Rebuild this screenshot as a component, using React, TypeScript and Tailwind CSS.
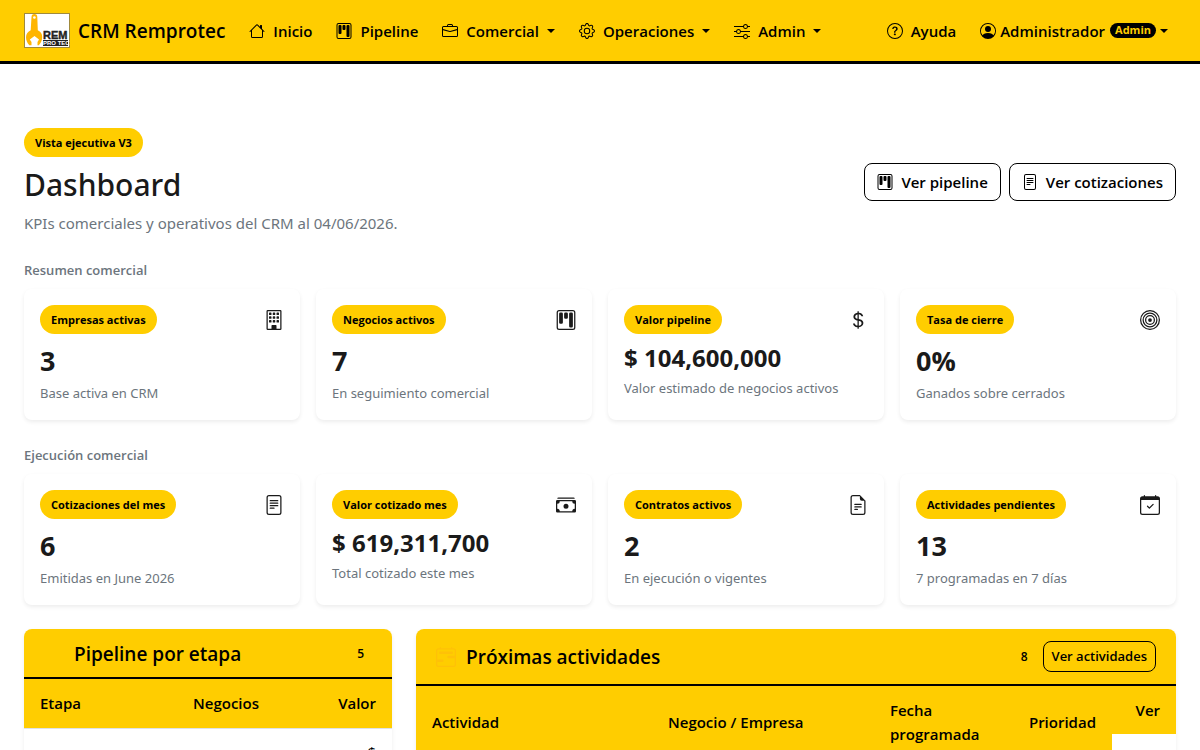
import React from 'react';
import type { IconType } from 'react-icons';
import {
    BsBriefcase,
    BsBuilding,
    BsBullseye,
    BsCalendar2Range,
    BsCalendarCheck,
    BsCashStack,
    BsCurrencyDollar,
    BsFileEarmarkText,
    BsFileText,
    BsGear,
    BsHouse,
    BsKanban,
    BsPersonCircle,
    BsQuestionCircle,
    BsSliders,
} from 'react-icons/bs';

interface NavItem {
    label: string;
    icon: IconType;
    dropdown?: boolean;
}

interface Kpi {
    label: string;
    value: string;
    hint: string;
    icon: IconType;
    money?: boolean;
}

const navItems: NavItem[] = [
    { label: 'Inicio', icon: BsHouse },
    { label: 'Pipeline', icon: BsKanban },
    { label: 'Comercial', icon: BsBriefcase, dropdown: true },
    { label: 'Operaciones', icon: BsGear, dropdown: true },
    { label: 'Admin', icon: BsSliders, dropdown: true },
];

const resumen: Kpi[] = [
    { label: 'Empresas activas', value: '3', hint: 'Base activa en CRM', icon: BsBuilding },
    { label: 'Negocios activos', value: '7', hint: 'En seguimiento comercial', icon: BsKanban },
    { label: 'Valor pipeline', value: '$ 104,600,000', hint: 'Valor estimado de negocios activos', icon: BsCurrencyDollar, money: true },
    { label: 'Tasa de cierre', value: '0%', hint: 'Ganados sobre cerrados', icon: BsBullseye },
];

const ejecucion: Kpi[] = [
    { label: 'Cotizaciones del mes', value: '6', hint: 'Emitidas en June 2026', icon: BsFileText },
    { label: 'Valor cotizado mes', value: '$ 619,311,700', hint: 'Total cotizado este mes', icon: BsCashStack, money: true },
    { label: 'Contratos activos', value: '2', hint: 'En ejecución o vigentes', icon: BsFileEarmarkText },
    { label: 'Actividades pendientes', value: '13', hint: '7 programadas en 7 días', icon: BsCalendarCheck },
];

const Caret = () => (
    <span className="border-x-4 border-t-4 border-x-transparent border-t-black" aria-hidden="true" />
);

const Logo = () => (
    <svg viewBox="0 0 46 35" className="h-[35px] w-[46px]" role="img" aria-label="Rem Pro Tec">
        <rect x="0.5" y="0.5" width="45" height="34" fill="#fff" stroke="#a08a3c" />
        <path
            d="M7.500 4a2.900 2.900 0 0 1 5.800 0l.5 13.300c3 1.300 4.400 3.600 4.400 6.700 0 3.400-1.300 6-3.400 8.200H13.500v-3.200l1.500-2.500-4.500-3.500-4.700 3.500 1.700 2.500v3.200H5.300C3.200 30 2 27.500 2 24.300c0-3.300 1.900-5.800 4.700-7z"
            fill="#ffb500"
        />
        <circle cx="10.400" cy="4.500" r="1.300" fill="#fff" />
        <rect x="19" y="27" width="25" height="6" fill="#222" />
        <text x="19" y="26" fontFamily="Liberation Sans, sans-serif" fontSize="11" fontWeight="700" fill="#222" stroke="#222" strokeWidth="0.400">REM</text>
        <text x="19" y="32" fontFamily="Liberation Sans, sans-serif" fontSize="6" fontWeight="700" fill="#fff">PRO TEC</text>
    </svg>
);

const Pill = ({ children }: { children: React.ReactNode }) => (
    <span className="inline-flex h-[29px] items-center rounded-full bg-[#ffcd00] px-[11px] pt-0.5 text-[11px] font-bold text-black">
        {children}
    </span>
);

const KpiCard = ({ kpi }: { kpi: Kpi }) => {
    const Icon = kpi.icon;
    return (
        <article className="h-[131px] rounded-lg bg-white p-4 shadow-[0_2px_4px_rgba(0,0,0,0.075)]">
            <div className="flex items-center justify-between">
                <Pill>{kpi.label}</Pill>
                <Icon className="h-5 w-5" />
            </div>
            <p className={kpi.money ? 'mt-2 text-2xl font-bold' : 'mt-2 text-[27px] leading-[38px] font-bold'}>
                {kpi.value}
            </p>
            <p
                className={
                    kpi.money
                        ? "mt-1 font-['Noto_Sans','Open_Sans',sans-serif] text-[13px] leading-5 text-[#6c757d]"
                        : "mt-[3px] font-['Noto_Sans','Open_Sans',sans-serif] text-[13px] leading-5 text-[#6c757d]"
                }
            >
                {kpi.hint}
            </p>
        </article>
    );
};

const KpiSection = ({ title, items }: { title: string; items: Kpi[] }) => (
    <section className="mb-6">
        <h2 className="mb-2 text-[13px] leading-[22px] font-semibold text-[#6c757d]">{title}</h2>
        <div className="grid grid-cols-4 gap-4">
            {items.map((kpi) => (
                <KpiCard key={kpi.label} kpi={kpi} />
            ))}
        </div>
    </section>
);

const Navbar = () => (
    <header className="flex h-16 items-center border-b-3 border-black bg-[#ffcd00] px-6 text-[15px] font-semibold text-black">
        <a href="#" className="mr-6 flex items-center gap-2 text-[19px]">
            <Logo />
            <span className="pt-0.5">CRM Remprotec</span>
        </a>
        <nav className="flex flex-1 items-center gap-6">
            {navItems.map(({ label, icon: Icon, dropdown }) =>
                dropdown ? (
                    <button key={label} type="button" className="flex items-center gap-2">
                        <Icon className="h-4 w-4" />
                        <span className="pt-0.5">{label}</span>
                        <Caret />
                    </button>
                ) : (
                    <a key={label} href="#" className="flex items-center gap-2">
                        <Icon className="h-4 w-4" />
                        <span className="pt-0.5">{label}</span>
                    </a>
                ),
            )}
        </nav>
        <div className="flex items-center gap-6 pr-2">
            <a href="#" className="flex items-center gap-2">
                <BsQuestionCircle className="h-4 w-4" />
                <span className="pt-0.5">Ayuda</span>
            </a>
            <button type="button" className="flex items-center gap-1">
                <BsPersonCircle className="h-4 w-4" />
                <span className="pt-0.5">Administrador</span>
                <span className="ml-px flex h-[15px] items-center rounded-full bg-black px-[5px] text-[11px] font-bold text-[#ffcd00]">Admin</span>
                <Caret />
            </button>
        </div>
    </header>
);

const PipelinePanel = () => (
    <section className="col-span-4 overflow-hidden rounded-lg bg-white shadow-[0_2px_4px_rgba(0,0,0,0.075)]">
        <div className="flex h-[50px] items-center justify-between border-b-2 border-black bg-[#ffcd00] pt-0.5 pr-7 pl-[50px] text-black">
            <h2 className="text-[19px] font-semibold">Pipeline por etapa</h2>
            <span className="text-[12px] font-semibold">5</span>
        </div>
        <table className="w-full text-[15px]">
            <thead>
                <tr className="h-[49px] border-b border-[#dee2e6] bg-[#ffcd00] text-black">
                    <th className="px-4 text-left font-semibold">Etapa</th>
                    <th className="px-4 text-right font-semibold">Negocios</th>
                    <th className="w-[117px] px-4 text-right font-semibold">Valor</th>
                </tr>
            </thead>
            <tbody>
                <tr>
                    <td className="px-4 py-3" />
                    <td className="px-4 py-3" />
                    <td className="px-4 py-3 text-right text-black">$</td>
                </tr>
            </tbody>
        </table>
    </section>
);

const ActividadesPanel = () => (
    <section className="col-span-8 overflow-hidden rounded-lg bg-white shadow-[0_2px_4px_rgba(0,0,0,0.075)]">
        <div className="flex h-[57px] items-center border-b-2 border-black bg-[#ffcd00] px-5 text-black">
            <BsCalendar2Range className="mr-[10px] h-5 w-5 text-[#ffc107]" />
            <h2 className="flex-1 pt-0.5 text-[19px] font-semibold">Próximas actividades</h2>
            <span className="mr-[15px] text-[12px] font-semibold">8</span>
            <button type="button" className="h-[31px] rounded-lg border border-black px-2 text-[13px] font-semibold">
                Ver actividades
            </button>
        </div>
        <table className="w-full text-[15px] leading-6">
            <thead>
                <tr className="h-[73px] border-b border-[#dee2e6] bg-[#ffcd00] text-left text-black">
                    <th className="w-[236px] px-4 font-semibold">Actividad</th>
                    <th className="px-4 font-semibold">Negocio / Empresa</th>
                    <th className="w-[139px] px-4 font-semibold">Fecha programada</th>
                    <th className="w-[99px] px-4 font-semibold">Prioridad</th>
                    <th className="w-16 bg-white align-top font-semibold">
                        <div className="h-12 bg-[#ffcd00] px-4 pt-3 text-right">Ver</div>
                    </th>
                </tr>
            </thead>
        </table>
    </section>
);

export default function App() {
    return (
        <div className="h-screen overflow-hidden bg-white font-['Open_Sans','Noto_Sans',sans-serif] text-[#1a1a1a]">
            <Navbar />
            <main className="px-6 pt-16">
                <div className="mb-6 flex items-center justify-between">
                    <div>
                        <Pill>Vista ejecutiva V3</Pill>
                        <h1 className="mt-2 font-['Noto_Sans','Open_Sans',sans-serif] text-[30px] leading-10 font-medium">Dashboard</h1>
                        <p className="mt-1.5 font-['Noto_Sans','Open_Sans',sans-serif] text-[15px] leading-6 text-[#6c757d]">
                            KPIs comerciales y operativos del CRM al 04/06/2026.
                        </p>
                    </div>
                    <div className="flex gap-2 text-[15px] font-semibold text-black">
                        <button type="button" className="flex h-[38px] items-center gap-2 rounded-lg border border-black px-3">
                            <BsKanban className="h-4 w-4" />
                            <span className="pt-0.5">Ver pipeline</span>
                        </button>
                        <button type="button" className="flex h-[38px] items-center gap-2 rounded-lg border border-black px-3">
                            <BsFileText className="h-4 w-4" />
                            <span className="pt-0.5">Ver cotizaciones</span>
                        </button>
                    </div>
                </div>
                <KpiSection title="Resumen comercial" items={resumen} />
                <KpiSection title="Ejecución comercial" items={ejecucion} />
                <div className="grid grid-cols-12 items-start gap-6">
                    <PipelinePanel />
                    <ActividadesPanel />
                </div>
            </main>
        </div>
    );
}
